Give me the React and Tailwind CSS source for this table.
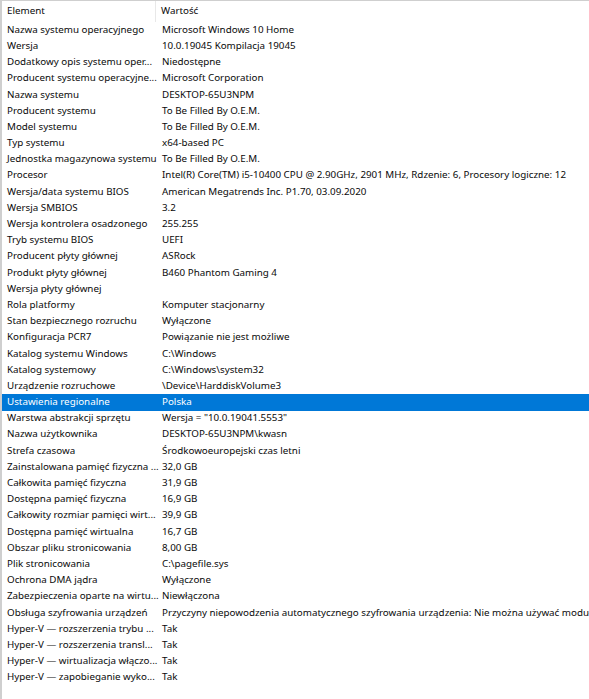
const rows = [
  ["Nazwa systemu operacyjnego", "Microsoft Windows 10 Home"],
  ["Wersja", "10.0.19045 Kompilacja 19045"],
  ["Dodatkowy opis systemu oper...", "Niedostępne"],
  ["Producent systemu operacyjne...", "Microsoft Corporation"],
  ["Nazwa systemu", "DESKTOP-65U3NPM"],
  ["Producent systemu", "To Be Filled By O.E.M."],
  ["Model systemu", "To Be Filled By O.E.M."],
  ["Typ systemu", "x64-based PC"],
  ["Jednostka magazynowa systemu", "To Be Filled By O.E.M."],
  ["Procesor", "Intel(R) Core(TM) i5-10400 CPU @ 2.90GHz, 2901 MHz, Rdzenie: 6, Procesory logiczne: 12"],
  ["Wersja/data systemu BIOS", "American Megatrends Inc. P1.70, 03.09.2020"],
  ["Wersja SMBIOS", "3.2"],
  ["Wersja kontrolera osadzonego", "255.255"],
  ["Tryb systemu BIOS", "UEFI"],
  ["Producent płyty głównej", "ASRock"],
  ["Produkt płyty głównej", "B460 Phantom Gaming 4"],
  ["Wersja płyty głównej", ""],
  ["Rola platformy", "Komputer stacjonarny"],
  ["Stan bezpiecznego rozruchu", "Wyłączone"],
  ["Konfiguracja PCR7", "Powiązanie nie jest możliwe"],
  ["Katalog systemu Windows", "C:\\Windows"],
  ["Katalog systemowy", "C:\\Windows\\system32"],
  ["Urządzenie rozruchowe", "\\Device\\HarddiskVolume3"],
  ["Ustawienia regionalne", "Polska", true],
  ["Warstwa abstrakcji sprzętu", "Wersja = \"10.0.19041.5553\""],
  ["Nazwa użytkownika", "DESKTOP-65U3NPM\\kwasn"],
  ["Strefa czasowa", "Środkowoeuropejski czas letni"],
  ["Zainstalowana pamięć fizyczna ...", "32,0 GB"],
  ["Całkowita pamięć fizyczna", "31,9 GB"],
  ["Dostępna pamięć fizyczna", "16,9 GB"],
  ["Całkowity rozmiar pamięci wirt...", "39,9 GB"],
  ["Dostępna pamięć wirtualna", "16,7 GB"],
  ["Obszar pliku stronicowania", "8,00 GB"],
  ["Plik stronicowania", "C:\\pagefile.sys"],
  ["Ochrona DMA jądra", "Wyłączone"],
  ["Zabezpieczenia oparte na wirtu...", "Niewłączona"],
  ["Obsługa szyfrowania urządzeń", "Przyczyny niepowodzenia automatycznego szyfrowania urządzenia: Nie można używać modułu TPM"],
  ["Hyper-V — rozszerzenia trybu ...", "Tak"],
  ["Hyper-V — rozszerzenia transl...", "Tak"],
  ["Hyper-V — wirtualizacja włączo...", "Tak"],
  ["Hyper-V — zapobieganie wyko...", "Tak"],
];

export default function App() {
  return (
    <div
      className="w-[589px] h-[699px] overflow-hidden bg-white border-t border-l-2 border-[#cfcfcf] text-[9.8px] text-[#0a0a0a]"
      style={{ fontFamily: '"Noto Sans", sans-serif' }}
    >
      <div className="flex h-[21px] items-center">
        <div className="w-[154px] pl-[5px] border-r border-[#e8e8e8] h-full flex items-center">Element</div>
        <div className="pl-[5px]">Wartość</div>
      </div>
      {rows.map(([name, value, selected]) => (
        <div
          key={name}
          className={
            "flex h-[16.2px] items-center whitespace-nowrap " +
            (selected ? "bg-[#0078d7] text-white" : "")
          }
        >
          <div className="w-[155px] pl-[5px] shrink-0">{name}</div>
          <div className="pl-[5px]">{value}</div>
        </div>
      ))}
    </div>
  );
}
